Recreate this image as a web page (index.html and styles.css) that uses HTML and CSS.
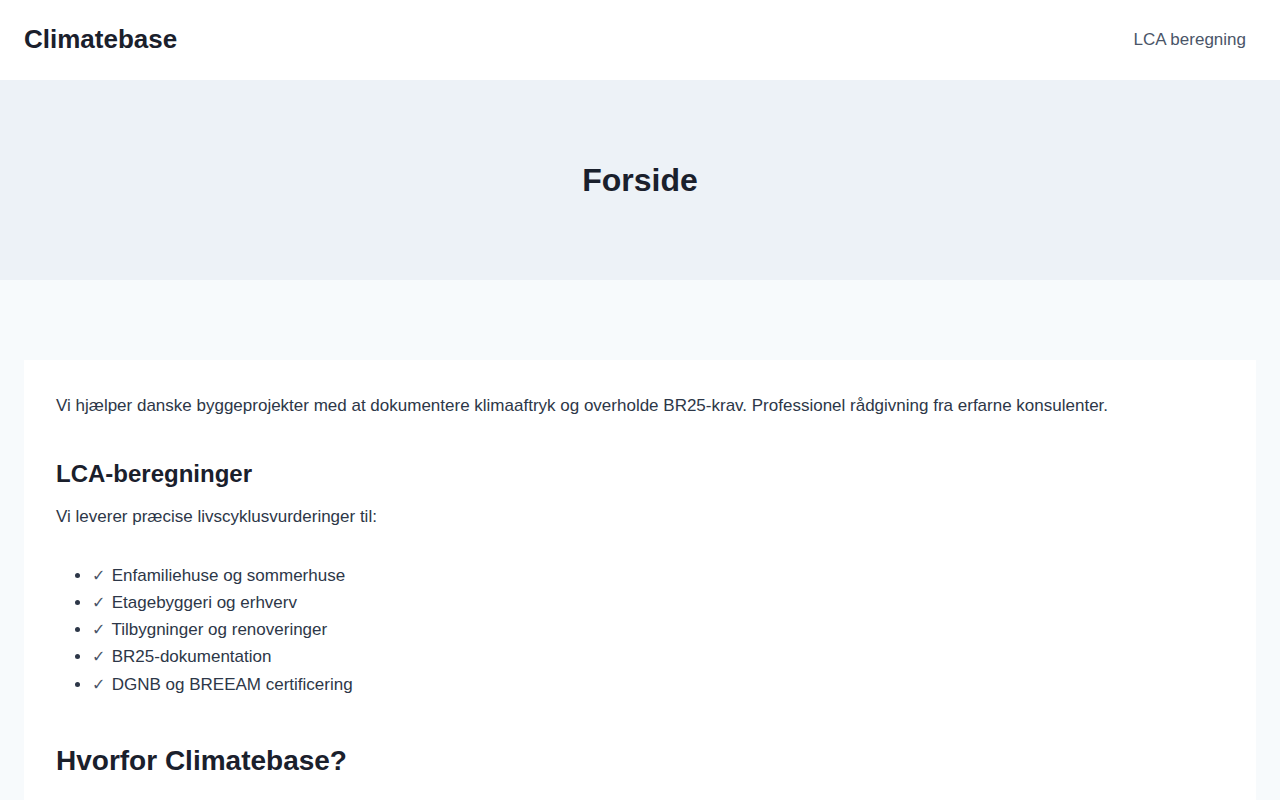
FILE: index.html
```html
<!DOCTYPE html>
<html lang="da">
<head>
<meta charset="utf-8">
<title>Climatebase</title>
<link rel="stylesheet" href="styles.css">
</head>
<body>
<header class="site-header">
  <a class="logo" href="#">Climatebase</a>
  <nav class="nav"><a href="#">LCA beregning</a></nav>
</header>
<section class="hero">
  <h1>Forside</h1>
</section>
<main class="main">
  <article class="card">
    <p class="intro">Vi hjælper danske byggeprojekter med at dokumentere klimaaftryk og overholde BR25-krav. Professionel rådgivning fra erfarne konsulenter.</p>
    <h2>LCA-beregninger</h2>
    <p>Vi leverer præcise livscyklusvurderinger til:</p>
    <ul class="list">
      <li><span class="check">✓</span> Enfamiliehuse og sommerhuse</li>
      <li><span class="check">✓</span> Etagebyggeri og erhverv</li>
      <li><span class="check">✓</span> Tilbygninger og renoveringer</li>
      <li><span class="check">✓</span> BR25-dokumentation</li>
      <li><span class="check">✓</span> DGNB og BREEAM certificering</li>
    </ul>
    <h2 class="big">Hvorfor Climatebase?</h2>
  </article>
</main>
</body>
</html>
```
FILE: styles.css
```css
* { box-sizing: border-box; }
html, body { margin: 0; padding: 0; }
body {
  font-family: "Liberation Sans", Arial, "DejaVu Sans", sans-serif;
  background: #f7fafc;
  color: #2d3748;
  font-size: 17px;
  line-height: 1.6;
}
a { text-decoration: none; }
.site-header {
  height: 80px;
  background: #ffffff;
  display: flex;
  align-items: center;
  justify-content: space-between;
  padding: 0 34px 0 24px;
}
.logo {
  font-size: 26px;
  font-weight: 700;
  color: #1a202c;
}
.nav a {
  color: #4a5568;
  font-size: 17px;
}
.hero {
  height: 200px;
  background: #edf2f7;
  display: flex;
  align-items: center;
  justify-content: center;
}
.hero h1 {
  margin: 0;
  font-size: 32px;
  line-height: 1.2;
  color: #1a202c;
  font-weight: 700;
}
.main {
  padding: 80px 24px 0;
}
.card {
  background: #ffffff;
  padding: 32px 32px 40px;
}
.card p { margin: 0; }
.card h2 {
  margin: 39px 0 14px;
  font-size: 24px;
  line-height: 1.3;
  color: #1a202c;
}
.card h2.big {
  font-size: 28px;
  margin-top: 45px;
}
.list {
  margin: 31px 0 0;
  padding-left: 36px;
}
.list li { line-height: 27.3px; }
.check {
  font-family: "DejaVu Sans", sans-serif;
  font-weight: 400;
  display: inline-block;
  width: 15px;
  font-size: 16px;
  color: #4a5568;
}
```
